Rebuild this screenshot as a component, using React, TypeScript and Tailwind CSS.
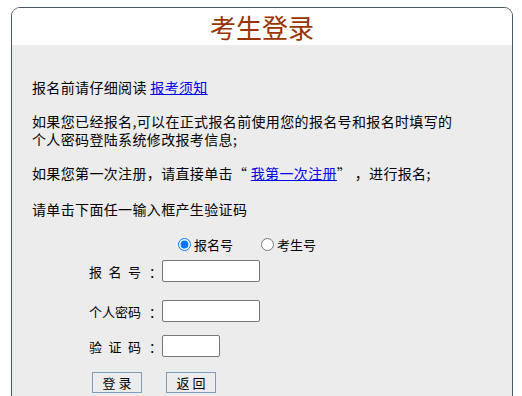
const font = { fontFamily: '"Noto Sans CJK SC", "Noto Sans", sans-serif' }

function FieldLabel({ chars, spread = true }: { chars: string; spread?: boolean }) {
  return (
    <div className="flex w-[73px] shrink-0 items-center">
      <span className={spread ? 'flex w-[52px] justify-between' : 'flex w-[52px]'}>
        {chars.split('').map((c, i) => (
          <span key={i}>{c}</span>
        ))}
      </span>
      <span className="ml-[8px]">：</span>
    </div>
  )
}

export default function App() {
  return (
    <div className="min-h-[396px] bg-white pl-[11px] pt-[7px] text-[13px] leading-[17px] text-black" style={font}>
      <div className="w-[502px] overflow-hidden rounded-t-[9px] border border-b-0 border-[#4b5566]">
        {/* title */}
        <div className="flex h-[37px] items-center justify-center bg-white">
          <h1 className="text-[26px] leading-[30px] text-[#993300]">考生登录</h1>
        </div>

        <div className="h-[360px] bg-[#ececec] pl-[20px] pt-[33px]">
          <div className="text-[14px] leading-[18px] tracking-[0.35px]">
            <p className="mb-[16px]">
              报名前请仔细阅读{' '}
              <a href="#" className="text-[#0000ee] underline">
                报考须知
              </a>
            </p>
            <p className="mb-[16px]">
              如果您已经报名,可以在正式报名前使用您的报名号和报名时填写的
              <br />
              个人密码登陆系统修改报考信息;
            </p>
            <p className="mb-[18px]">
              如果您第一次注册，请直接单击“{' '}
              <a href="#" className="text-[#0000ee] underline">
                我第一次注册
              </a>
              ” ，进行报名;
            </p>
            <p>请单击下面任一输入框产生验证码</p>
          </div>

          {/* radio row */}
          <div className="mt-[18px] flex h-[17px] items-center pl-[146px]">
            <label className="flex items-center">
              <input type="radio" name="kind" defaultChecked className="m-0 h-[13px] w-[13px]" />
              <span className="ml-[3px]">报名号</span>
            </label>
            <label className="ml-[28px] flex items-center">
              <input type="radio" name="kind" className="m-0 h-[13px] w-[13px]" />
              <span className="ml-[3px]">考生号</span>
            </label>
          </div>

          <div className="mt-[7px] flex h-[22px] items-center pl-[57px]">
            <FieldLabel chars="报名号" />
            <input className="h-[22px] w-[98px] rounded-[2px] border border-[#767676] bg-white px-1 outline-none" />
          </div>

          <div className="mt-[18px] flex h-[22px] items-center pl-[57px]">
            <FieldLabel chars="个人密码" spread={false} />
            <input
              type="password"
              className="h-[22px] w-[98px] rounded-[2px] border border-[#767676] bg-white px-1 outline-none"
            />
          </div>

          <div className="mt-[13px] flex h-[22px] items-center pl-[57px]">
            <FieldLabel chars="验证码" />
            <input className="h-[22px] w-[58px] rounded-[2px] border border-[#767676] bg-white px-1 outline-none" />
          </div>

          <div className="mt-[15px] flex gap-[24px] pl-[60px]">
            <button
              type="button"
              className="h-[21px] w-[50px] border border-[#7f9db9] bg-[#ececec] text-[13px] leading-[17px]"
            >
              登 录
            </button>
            <button
              type="button"
              className="h-[21px] w-[50px] border border-[#7f9db9] bg-[#ececec] text-[13px] leading-[17px]"
            >
              返 回
            </button>
          </div>
        </div>
      </div>
    </div>
  )
}
